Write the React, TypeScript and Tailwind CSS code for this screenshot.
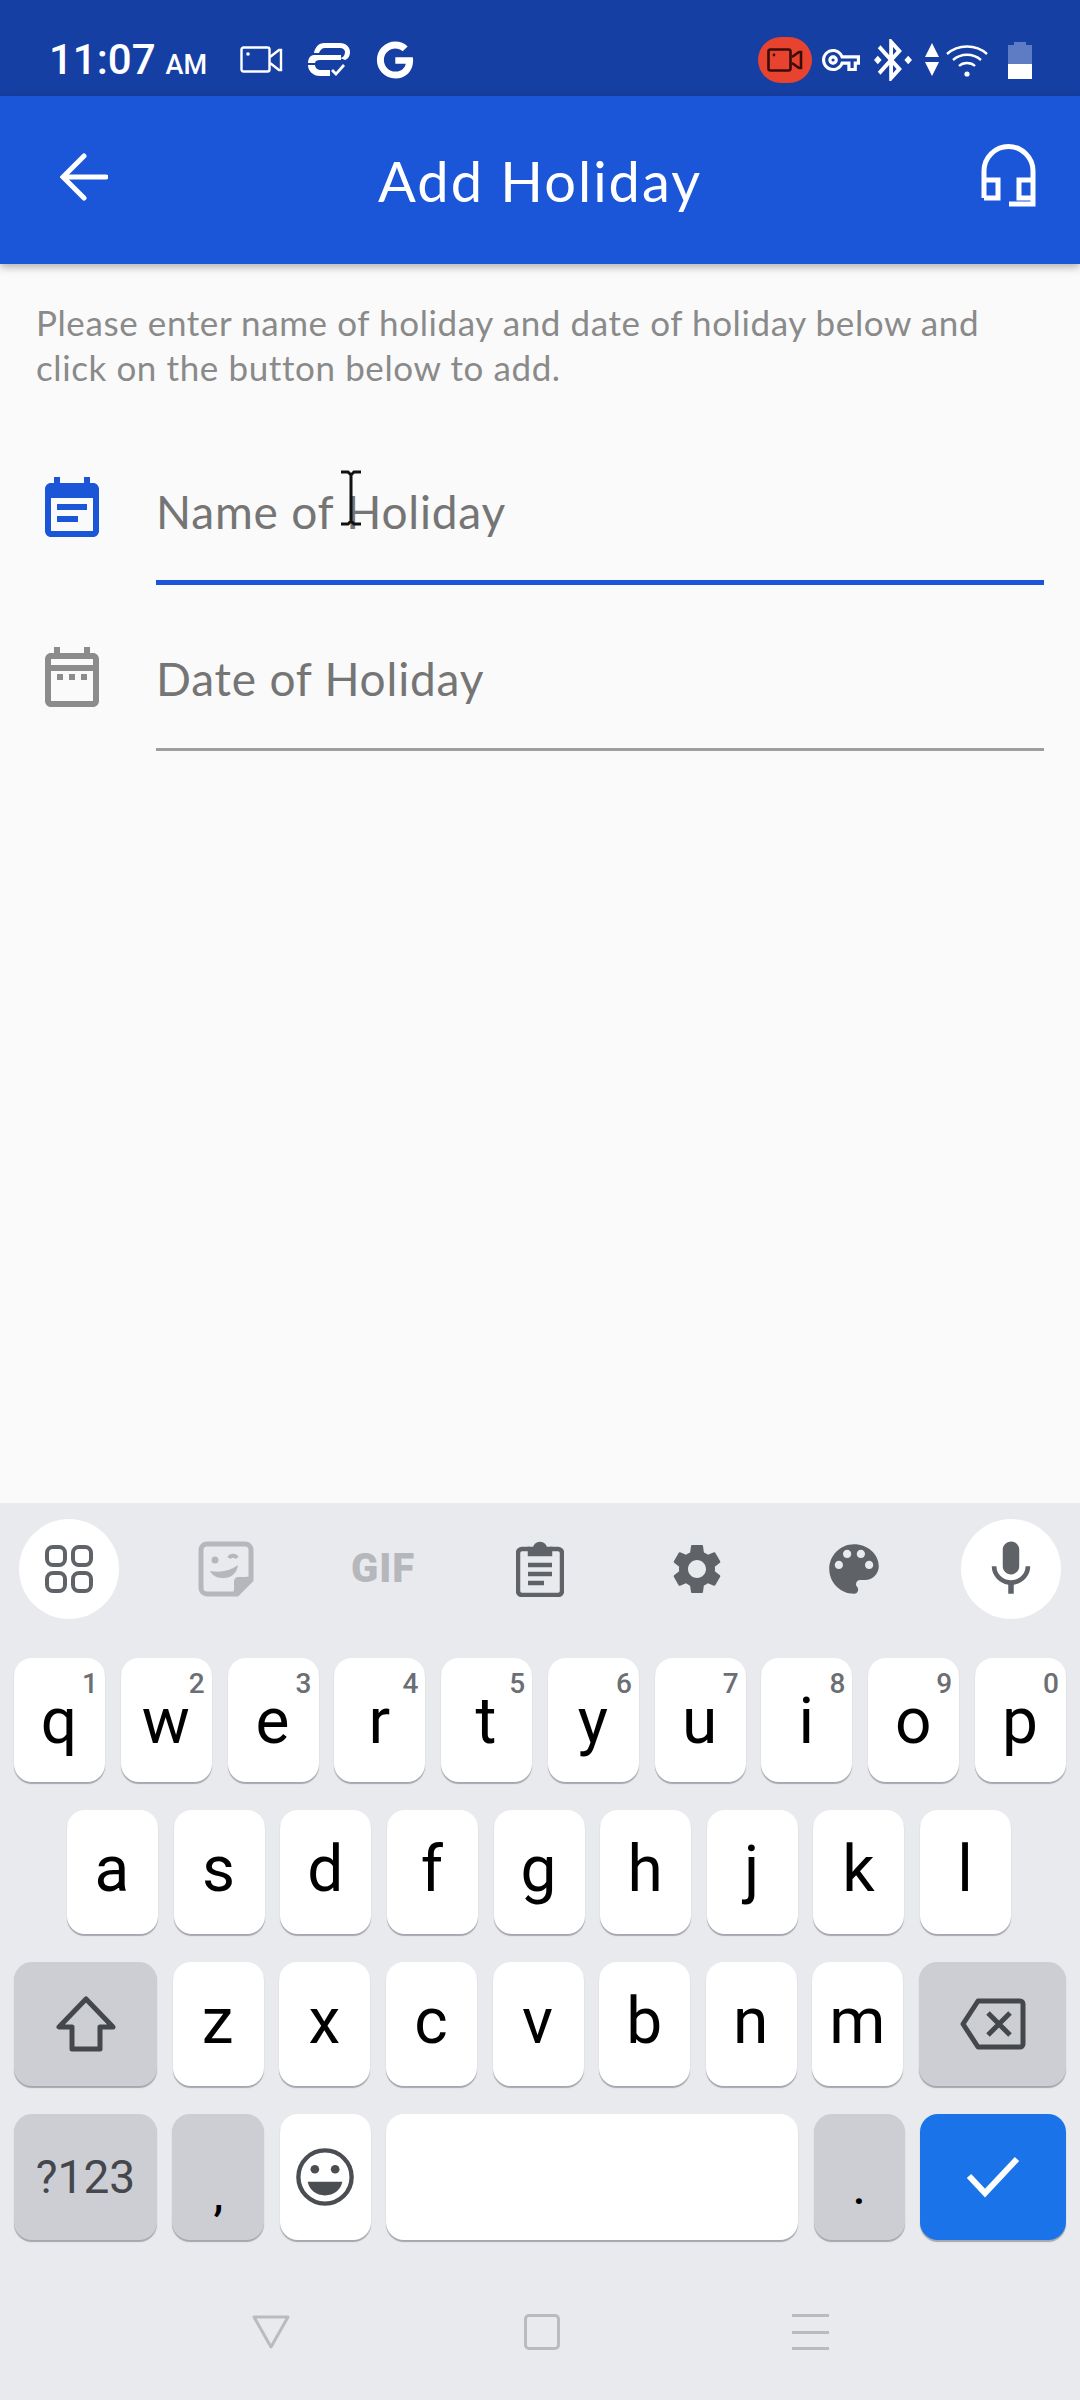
import React from 'react'
import { FaGoogle } from 'react-icons/fa'

const roboto = "font-['Roboto',sans-serif]"
const lato = "font-['Lato',sans-serif]"

const topRow = [['q', '1'], ['w', '2'], ['e', '3'], ['r', '4'], ['t', '5'], ['y', '6'], ['u', '7'], ['i', '8'], ['o', '9'], ['p', '0']]
const midRow = ['a', 's', 'd', 'f', 'g', 'h', 'j', 'k', 'l']
const lowRow = ['z', 'x', 'c', 'v', 'b', 'n', 'm']

const Key = ({ children, className }: { children?: React.ReactNode; className?: string }) => (
  <div className={`relative flex h-full items-center justify-center rounded-[18px] shadow-[0_2px_1px_#a4a7ad] ${className}`}>
    {children}
  </div>
)

const LetterKey = ({ label, hint }: { label: string; hint?: string }) => (
  <Key className="w-[91px] bg-white">
    <span className={`${roboto} mr-[1px] text-[64px] leading-none text-black ${hint ? 'mt-[3px]' : 'mt-[-4px]'}`}>{label}</span>
    {hint && <span className={`${roboto} absolute right-[7px] top-[12px] text-[28px] font-medium leading-none text-[#6b6e73]`}>{hint}</span>}
  </Key>
)

const StatusBar = () => (
  <div className={`${roboto} relative flex h-[96px] shrink-0 items-center bg-[#163fa3] pt-[24px] text-white`}>
    <div className="ml-[49px] flex items-baseline">
      <span className="text-[42px] font-medium leading-none">11:07</span>
      <span className="ml-[10px] text-[27px] font-medium leading-none">AM</span>
    </div>
    <svg className="ml-[33px]" width="43" height="28" viewBox="0 0 43 28" fill="none" stroke="white" strokeWidth="2.4">
      <rect x="1.5" y="1.5" width="28" height="24" rx="2" />
      <path d="M30 11l9-7h2v20h-2l-9-7" />
      <circle cx="8" cy="8" r="1.8" fill="white" stroke="none" />
    </svg>
    <svg className="ml-[25px]" width="42" height="36" viewBox="0 0 42 36" fill="white">
      <path d="M16 1h16c6 0 10 4 10 9 0 4-2 7-5 8l-5-2c3 0 5-3 5-6 0-2-2-4-5-4H17c-3 0-5 2-6 5H6c1-6 5-10 10-10z" />
      <path d="M6 13h27v5H12c-3 0-5 1-5 3h-7c0-4 2-8 6-8z" />
      <path d="M0 23h7c0 3 3 5 6 5h9v6H12C5 34 0 29 0 23z" />
      <path d="M25 27l3 3 7-8 2 2-9 10-5-5z" />
    </svg>
    <FaGoogle className="ml-[26px]" size={38} color="white" />

    <div className="ml-auto mr-[48px] flex items-center">
      <div className="flex h-[46px] w-[54px] items-center justify-center rounded-full bg-[#e8432e]">
        <svg width="36" height="24" viewBox="0 0 36 24" fill="none" stroke="#3a0d0d" strokeWidth="2.6">
          <rect x="1.5" y="1.5" width="22" height="21" rx="2" />
          <path d="M25 9l7-5h2v16h-2l-7-5" />
          <circle cx="7" cy="7" r="1.4" fill="#3a0d0d" stroke="none" />
        </svg>
      </div>
      <svg className="ml-[10px]" width="38" height="38" viewBox="0 0 24 24" fill="white">
        <path d="M22 19h-6v-4h-2.68c-1.14 2.42-3.6 4-6.32 4-3.86 0-7-3.14-7-7s3.14-7 7-7c2.72 0 5.17 1.58 6.32 4H24v6h-2v4zm-4-2h2v-4h2v-2H11.94l-.23-.67C11.01 8.34 9.11 7 7 7c-2.76 0-5 2.24-5 5s2.24 5 5 5c2.11 0 4.01-1.34 4.71-3.33l.23-.67H18v4zM7 15c-1.65 0-3-1.35-3-3s1.35-3 3-3 3 1.35 3 3-1.35 3-3 3zm0-4c-.55 0-1 .45-1 1s.45 1 1 1 1-.45 1-1-.45-1-1-1z" />
      </svg>
      <svg className="ml-[14px]" width="38" height="42" viewBox="3 2 20 20" fill="white" preserveAspectRatio="none">
        <path d="M7 12l-2-2-2 2 2 2 2-2zm10.71-4.29L12 2h-1v7.59L6.41 5 5 6.41 10.59 12 5 17.59 6.41 19 11 14.41V22h1l5.71-5.71-4.3-4.29 4.3-4.29zM13 5.83l1.88 1.88L13 9.59V5.83zm1.88 10.46L13 18.17v-3.76l1.88 1.88zM21 10l-2 2 2 2 2-2-2-2z" />
      </svg>
      <svg className="ml-[12px]" width="16" height="34" viewBox="0 0 16 34" fill="white">
        <path d="M8 0l7 14H1zM1 19h14l-7 14z" />
      </svg>
      <svg className="ml-[6px]" width="42" height="34" viewBox="0 0 42 34" fill="none" stroke="white" strokeWidth="2.4">
        <path d="M1 11c11-10 29-10 40 0M7 17c8-7 20-7 28 0M13 23c4-4 12-4 16 0" />
        <circle cx="21" cy="31" r="2.6" fill="white" stroke="none" />
      </svg>
      <div className="ml-[20px] flex h-[37px] w-[24px] flex-col">
        <div className="mx-auto h-[3px] w-[12px] bg-[#5d7cc4]" />
        <div className="h-[19px] bg-[#5d7cc4]" />
        <div className="h-[15px] bg-white" />
      </div>
    </div>
  </div>
)

const Header = () => (
  <div className="relative z-10 flex h-[168px] shrink-0 items-center justify-between bg-[#1b55d8] pl-[60px] pr-[44px] shadow-[0_3px_8px_rgba(0,0,0,0.3)]">
    <svg width="48" height="48" viewBox="0 0 48 48" fill="none" stroke="white" strokeWidth="5" strokeLinecap="round" className="mt-[-6px]">
      <path d="M46 24H4M24 3L3 24l21 21" />
    </svg>
    <span className={`${lato} absolute left-0 right-0 mt-[2px] text-center text-[56px] leading-none tracking-[2px] text-white`}>Add Holiday</span>
    <svg width="55" height="64" viewBox="0 0 55 64" fill="none" stroke="white" strokeWidth="5" className="mt-[-10px]">
      <path d="M3 55V28a24.5 24.5 0 0 1 49 0v33H28" />
      <path d="M3 37h14v18H3M52 37H38v18h14" />
    </svg>
  </div>
)

const Field = ({ label, active, icon, className }: { label: string; active?: boolean; icon: React.ReactNode; className?: string }) => (
  <div className={`flex items-start ${className}`}>
    <div className="ml-[36px] w-[84px] shrink-0">{icon}</div>
    <div className={`ml-[36px] mr-[36px] flex-1 ${active ? 'h-[111px] border-b-[5px] border-[#1b55d8]' : 'h-[110px] border-b-[3px] border-[#9e9e9e]'}`}>
      <span className={`${lato} text-[46px] leading-[76px] tracking-[0.8px] text-[#757575]`}>{label}</span>
    </div>
  </div>
)

const Keyboard = () => (
  <div className="flex h-[897px] shrink-0 flex-col bg-[#e8eaed]">
    <div className="flex h-[155px] shrink-0 items-center justify-between px-[19px] pb-[23px] text-[#5f6368]">
      <div className="flex h-[100px] w-[100px] items-center justify-center rounded-full bg-white">
        <svg width="50" height="50" viewBox="0 0 50 50" fill="none" stroke="#5f6368" strokeWidth="4">
          <rect x="3" y="3" width="18" height="18" rx="6" />
          <rect x="29" y="3" width="18" height="18" rx="6" />
          <rect x="3" y="29" width="18" height="18" rx="6" />
          <rect x="29" y="29" width="18" height="18" rx="6" />
        </svg>
      </div>
      <div className="flex w-[100px] justify-center">
        <svg width="56" height="56" viewBox="0 0 56 56" fill="none" stroke="#b5b7bc" strokeWidth="5">
          <path d="M39 53H9a6 6 0 0 1-6-6V9a6 6 0 0 1 6-6h38a6 6 0 0 1 6 6v30z" />
          <path d="M38 53c0-10 5-15 15-15" />
          <path d="M38 53l15-15v-2H40c-2 0-4 2-4 4v13z" fill="#b5b7bc" stroke="none" />
          <path d="M12 30c10 2 20 0 28-6-1 8-7 14-16 13-6 0-10-3-12-7z" fill="#b5b7bc" stroke="none" />
          <circle cx="17" cy="19" r="3.5" fill="#b5b7bc" stroke="none" />
          <path d="M31 17c2-3 6-3 8 0" strokeWidth="4" />
        </svg>
      </div>
      <div className="flex w-[100px] justify-center">
        <span className={`${roboto} text-[40px] font-black leading-none tracking-[1px] text-[#b5b7bc]`}>GIF</span>
      </div>
      <div className="flex w-[100px] justify-center">
        <svg width="48" height="56" viewBox="0 0 48 56" fill="none" stroke="#5f6368" strokeWidth="4.5">
          <path d="M14 8H6a4 4 0 0 0-4 4v38a4 4 0 0 0 4 4h36a4 4 0 0 0 4-4V12a4 4 0 0 0-4-4h-8" />
          <path d="M14 13V8h5a5 5 0 0 1 10 0h5v5z" fill="#5f6368" />
          <path d="M12 24h24M12 33h24M12 42h16" />
        </svg>
      </div>
      <div className="flex w-[100px] justify-center">
        <svg width="60" height="60" viewBox="0 0 24 24" fill="#5f6368">
          <path d="M19.14 12.94c.04-.3.06-.61.06-.94 0-.32-.02-.64-.07-.94l2.03-1.58c.18-.14.23-.41.12-.61l-1.92-3.32c-.12-.22-.37-.29-.59-.22l-2.39.96c-.5-.38-1.03-.7-1.62-.94l-.36-2.54c-.04-.24-.24-.41-.48-.41h-3.84c-.24 0-.43.17-.47.41l-.36 2.54c-.59.24-1.13.57-1.62.94l-2.39-.96c-.22-.08-.47 0-.59.22L2.74 8.87c-.12.21-.08.47.12.61l2.03 1.58c-.05.3-.09.63-.09.94s.02.64.07.94l-2.03 1.58c-.18.14-.23.41-.12.61l1.92 3.32c.12.22.37.29.59.22l2.39-.96c.5.38 1.03.7 1.62.94l.36 2.54c.05.24.24.41.48.41h3.84c.24 0 .44-.17.47-.41l.36-2.54c.59-.24 1.13-.56 1.62-.94l2.39.96c.22.08.47 0 .59-.22l1.92-3.32c.12-.22.07-.47-.12-.61l-2.01-1.58zM12 15.6c-1.98 0-3.6-1.62-3.6-3.6s1.62-3.6 3.6-3.6 3.6 1.62 3.6 3.6-1.62 3.6-3.6 3.6z" />
        </svg>
      </div>
      <div className="flex w-[100px] justify-center">
        <svg width="66" height="66" viewBox="0 0 24 24" fill="#5f6368">
          <path d="M12 3c-4.97 0-9 4.03-9 9s4.03 9 9 9c.83 0 1.5-.67 1.5-1.5 0-.39-.15-.74-.39-1.01-.23-.26-.38-.61-.38-.99 0-.83.67-1.5 1.5-1.5H16c2.76 0 5-2.24 5-5 0-4.42-4.03-8-9-8zm-5.5 9c-.83 0-1.5-.67-1.5-1.5S5.67 9 6.5 9 8 9.67 8 10.5 7.33 12 6.5 12zm3-4C8.67 8 8 7.33 8 6.5S8.67 5 9.5 5s1.5.67 1.5 1.5S10.33 8 9.5 8zm5 0c-.83 0-1.5-.67-1.5-1.5S13.67 5 14.5 5s1.5.67 1.5 1.5S15.33 8 14.5 8zm3 4c-.83 0-1.5-.67-1.5-1.5S16.67 9 17.5 9s1.5.67 1.5 1.5-.67 1.5-1.5 1.5z" />
        </svg>
      </div>
      <div className="flex h-[100px] w-[100px] items-center justify-center rounded-full bg-white">
        <svg width="66" height="66" viewBox="0 0 24 24" fill="#5f6368">
          <path d="M12 14c1.66 0 2.99-1.34 2.99-3L15 5c0-1.66-1.34-3-3-3S9 3.34 9 5v6c0 1.66 1.34 3 3 3zm5.3-3c0 3-2.54 5.1-5.3 5.1S6.7 14 6.7 11H5c0 3.41 2.72 6.23 6 6.72V21h2v-3.28c3.28-.48 6-3.3 6-6.72h-1.7z" />
        </svg>
      </div>
    </div>

    <div className="flex flex-col gap-[28px] px-[14px]">
      <div className="flex h-[124px] justify-between">
        {topRow.map(([label, hint]) => <LetterKey key={label} label={label} hint={hint} />)}
      </div>
      <div className="flex h-[124px] justify-between pl-[53px] pr-[55px]">
        {midRow.map(label => <LetterKey key={label} label={label} />)}
      </div>
      <div className="flex h-[124px] justify-between">
        <Key className="w-[143px] bg-[#cdced3]">
          <svg width="60" height="56" viewBox="0 0 60 56" fill="none" stroke="#44474c" strokeWidth="5" strokeLinejoin="round">
            <path d="M30 3L3 31h13v22h28V31h13z" />
          </svg>
        </Key>
        {lowRow.map(label => <LetterKey key={label} label={label} />)}
        <Key className="w-[147px] bg-[#cdced3]">
          <svg width="66" height="52" viewBox="0 0 66 52" fill="none" stroke="#44474c" strokeWidth="5" strokeLinejoin="round">
            <path d="M18 3h42a3 3 0 0 1 3 3v40a3 3 0 0 1-3 3H18L3 26z" />
            <path d="M28 15l22 22M50 15L28 37" />
          </svg>
        </Key>
      </div>
      <div className="flex h-[126px] justify-between">
        <Key className="w-[143px] bg-[#cdced3]">
          <span className={`${roboto} text-[46px] leading-none text-[#44474c]`}>?123</span>
        </Key>
        <Key className="w-[92px] bg-[#cdced3]">
          <span className={`${roboto} mt-[36px] text-[44px] font-medium leading-none text-black`}>,</span>
        </Key>
        <Key className="w-[91px] bg-white">
          <svg width="60" height="60" viewBox="0 0 62 62" fill="none" stroke="#4a4d52" strokeWidth="4.5">
            <circle cx="31" cy="31" r="27.5" />
            <circle cx="20.5" cy="23" r="4.5" fill="#4a4d52" stroke="none" />
            <circle cx="41.5" cy="23" r="4.5" fill="#4a4d52" stroke="none" />
            <path d="M13 36h36c-2 9-9 14-18 14s-16-5-18-14z" fill="#4a4d52" stroke="none" />
          </svg>
        </Key>
        <Key className="w-[412px] bg-white" />
        <Key className="w-[91px] bg-[#cdced3]">
          <span className={`${roboto} mt-[24px] text-[44px] font-medium leading-none text-black`}>.</span>
        </Key>
        <Key className="w-[146px] bg-[#1a73e8]">
          <svg width="54" height="42" viewBox="0 0 54 42" fill="none" stroke="white" strokeWidth="6">
            <path d="M3 20l16 17L51 3" />
          </svg>
        </Key>
      </div>
    </div>

    <div className="flex flex-1 items-start justify-center pt-[74px]">
      <div className="flex w-[578px] items-center justify-between">
        <svg width="40" height="36" viewBox="0 0 40 36" fill="none" stroke="#b9bbbf" strokeWidth="3" strokeLinejoin="round">
          <path d="M3 3h34L20 33z" />
        </svg>
        <div className="h-[36px] w-[36px] rounded-[5px] border-[3px] border-[#b9bbbf]" />
        <div className="flex h-[36px] w-[37px] flex-col justify-between">
          <div className="h-[3px] bg-[#b9bbbf]" />
          <div className="h-[3px] bg-[#b9bbbf]" />
          <div className="h-[3px] bg-[#b9bbbf]" />
        </div>
      </div>
    </div>
  </div>
)

const App = () => {
  return (
    <div className="relative flex h-[2400px] w-[1080px] flex-col overflow-hidden bg-[#fafafa]">
      <StatusBar />
      <Header />

      <div className="relative flex-1">
        <p className={`${lato} ml-[36px] mr-[30px] mt-[36px] text-[35px] leading-[45px] tracking-[0.6px] text-[#8a8a8a]`}>
          Please enter name of holiday and date of holiday below and<br />click on the button below to add.
        </p>
        <Field
          className="mt-[84px]"
          label="Name of Holiday"
          active
          icon={
            <svg width="72" height="72" viewBox="0 0 24 24" fill="#1b55d8">
              <path d="M17 10H7v2h10v-2zm2-7h-1V1h-2v2H8V1H6v2H5c-1.11 0-1.99.9-1.99 2L3 19c0 1.1.89 2 2 2h14c1.1 0 2-.9 2-2V5c0-1.1-.9-2-2-2zm0 16H5V8h14v11zm-5-5H7v2h7v-2z" />
            </svg>
          }
        />
        <Field
          className="mt-[56px]"
          label="Date of Holiday"
          icon={
            <svg width="72" height="72" viewBox="0 0 24 24" fill="#8c8c8c">
              <path d="M7 11h2v2H7zm14-5v14c0 1.1-.9 2-2 2H5c-1.11 0-2-.9-2-2l.01-14c0-1.1.88-2 1.99-2h1V2h2v2h8V2h2v2h1c1.1 0 2 .9 2 2zM5 8h14V6H5v2zm14 12V10H5v10h14zm-4-7h2v-2h-2v2zm-4 0h2v-2h-2v2z" />
            </svg>
          }
        />
        {/* mouse pointer from the recording */}
        <svg className="absolute left-[340px] top-[206px]" width="22" height="56" viewBox="0 0 22 56" fill="none" stroke="#111" strokeWidth="3">
          <path d="M1 2h7l3 3 3-3h7M11 5v46M1 54h7l3-3 3 3h7" />
        </svg>
      </div>

      <Keyboard />
    </div>
  )
}

export default App
